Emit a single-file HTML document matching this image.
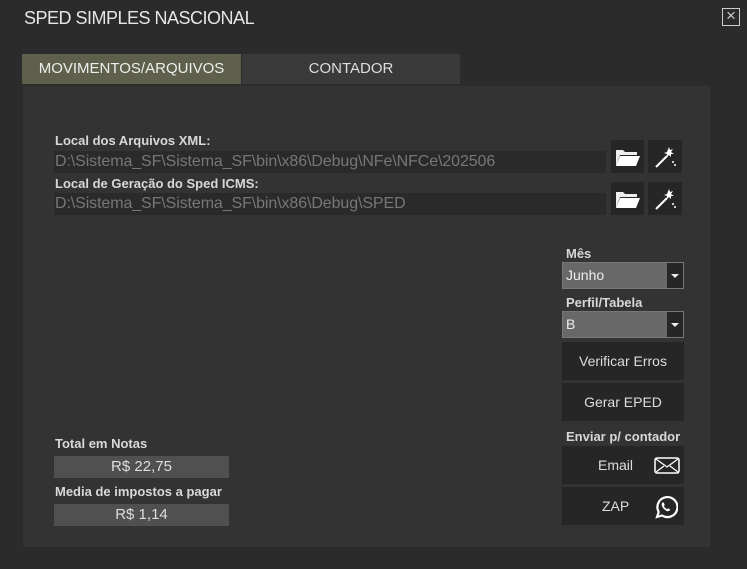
<!DOCTYPE html><html><head><meta charset="utf-8"><style>
body{margin:0;width:747px;height:569px;background:#2b2b2b;font-family:"Liberation Sans",sans-serif;position:relative;overflow:hidden;color:#ddd}
.a{position:absolute}
.lbl{font-size:13px;font-weight:bold;color:#d8d8d8}
.path{background:#2a2a2a;color:#777;font-size:16px;line-height:22px;padding-left:1px;letter-spacing:-0.1px}
.ib{background:#262626}
.btn{background:#262626;color:#ddd;font-size:14px;text-align:center}
.dd{background:#686868;color:#eee;font-size:14px;line-height:27px;padding-left:3px;box-sizing:border-box;border:1px solid #777}
.dd i{position:absolute;right:0;top:0;width:16px;height:25px;background:#262626}
.dd i:after{content:"";position:absolute;left:4px;top:11px;border:4px solid transparent;border-top:4px solid #eee;border-bottom:0}
.val{background:#505050;color:#ddd;font-size:15px;text-align:center;line-height:22px}
</style></head><body>
<div class="a" style="left:24px;top:8px;font-size:18px;color:#e6e6e6;letter-spacing:-0.5px">SPED SIMPLES NASCIONAL</div>
<div class="a" style="left:722px;top:8px;width:18px;height:18px;border:1.5px solid #ccc;box-sizing:border-box;color:#ccc;font-size:17px;line-height:14px;text-align:center">×</div>
<div class="a" style="left:22px;top:54px;width:219px;height:30px;background:#5e604b;color:#eee;font-size:15px;line-height:30px;text-align:center">MOVIMENTOS/ARQUIVOS</div>
<div class="a" style="left:242px;top:54px;width:218px;height:30px;background:#3a3a3a;color:#ddd;font-size:15px;line-height:30px;text-align:center">CONTADOR</div>
<div class="a" style="left:23px;top:86px;width:687px;height:461px;background:#333"></div>
<div class="a lbl" style="left:55px;top:133px">Local dos Arquivos XML:</div>
<div class="a path" style="left:54px;top:151px;width:551px;height:22px">D:\Sistema_SF\Sistema_SF\bin\x86\Debug\NFe\NFCe\202506</div>
<div class="a lbl" style="left:55px;top:176px">Local de Geração do Sped ICMS:</div>
<div class="a path" style="left:54px;top:193px;width:551px;height:22px">D:\Sistema_SF\Sistema_SF\bin\x86\Debug\SPED</div>
<div class="a ib" style="left:611px;top:140px;width:33px;height:33px"><svg width="33" height="33"><path d="M5 10h7l2 2h12v3H9l-4 11z" fill="#eee"/><path d="M9 16h20l-4 10H5z" fill="#fff"/></svg></div>
<div class="a ib" style="left:648px;top:140px;width:34px;height:33px"><svg width="34" height="33"><path d="M8 27l11-11" stroke="#fff" stroke-width="2"/><path d="M21 7l1 3 3-1-2 3 3 2-3 0 0 3-2-2-2 2 0-3-3-1 3-1z" fill="#fff"/><circle cx="25" cy="22" r="1" fill="#fff"/><circle cx="27" cy="25" r="1" fill="#fff"/></svg></div>
<div class="a ib" style="left:611px;top:182px;width:33px;height:33px"><svg width="33" height="33"><path d="M5 10h7l2 2h12v3H9l-4 11z" fill="#eee"/><path d="M9 16h20l-4 10H5z" fill="#fff"/></svg></div>
<div class="a ib" style="left:648px;top:182px;width:34px;height:33px"><svg width="34" height="33"><path d="M8 27l11-11" stroke="#fff" stroke-width="2"/><path d="M21 7l1 3 3-1-2 3 3 2-3 0 0 3-2-2-2 2 0-3-3-1 3-1z" fill="#fff"/><circle cx="25" cy="22" r="1" fill="#fff"/><circle cx="27" cy="25" r="1" fill="#fff"/></svg></div>
<div class="a lbl" style="left:566px;top:246px">Mês</div>
<div class="a dd" style="left:562px;top:262px;width:122px;height:27px;line-height:25px">Junho<i></i></div>
<div class="a lbl" style="left:566px;top:295px">Perfil/Tabela</div>
<div class="a dd" style="left:562px;top:311px;width:122px;height:27px;line-height:25px">B<i></i></div>
<div class="a btn" style="left:562px;top:342px;width:122px;height:38px;line-height:38px">Verificar Erros</div>
<div class="a btn" style="left:562px;top:383px;width:122px;height:38px;line-height:38px">Gerar EPED</div>
<div class="a lbl" style="left:566px;top:429px">Enviar p/ contador</div>
<div class="a btn" style="left:562px;top:446px;width:122px;height:38px;line-height:38px"><span style="position:absolute;left:36px">Email</span><svg class="a" style="left:92px;top:11px" width="26" height="17"><rect x="1" y="1" width="24" height="15" rx="2" fill="none" stroke="#fff" stroke-width="1.5"/><path d="M2 2l11 8 11-8M2 15l8-6M24 15l-8-6" fill="none" stroke="#fff" stroke-width="1.3"/></svg></div>
<div class="a btn" style="left:562px;top:487px;width:122px;height:38px;line-height:38px"><span style="position:absolute;left:40px">ZAP</span><svg class="a" style="left:92px;top:8px" width="24" height="24"><path d="M3 22l1.7-5A10 10 0 1 1 8 20.5z" fill="none" stroke="#fff" stroke-width="2.2"/><path d="M8.5 7.5c-1.2 1-1.2 3.5 1 6s4.5 3.5 5.8 2.2l1-1.2-2.2-1.3-1 1c-1.2-.3-3-2.2-3.3-3.3l1-1-1.2-2.4z" fill="#fff"/></svg></div>
<div class="a lbl" style="left:55px;top:436px">Total em Notas</div>
<div class="a val" style="left:54px;top:456px;width:175px;height:22px">R$ 22,75</div>
<div class="a lbl" style="left:55px;top:484px">Media de impostos a pagar</div>
<div class="a val" style="left:54px;top:504px;width:175px;height:22px">R$ 1,14</div>
</body></html>
